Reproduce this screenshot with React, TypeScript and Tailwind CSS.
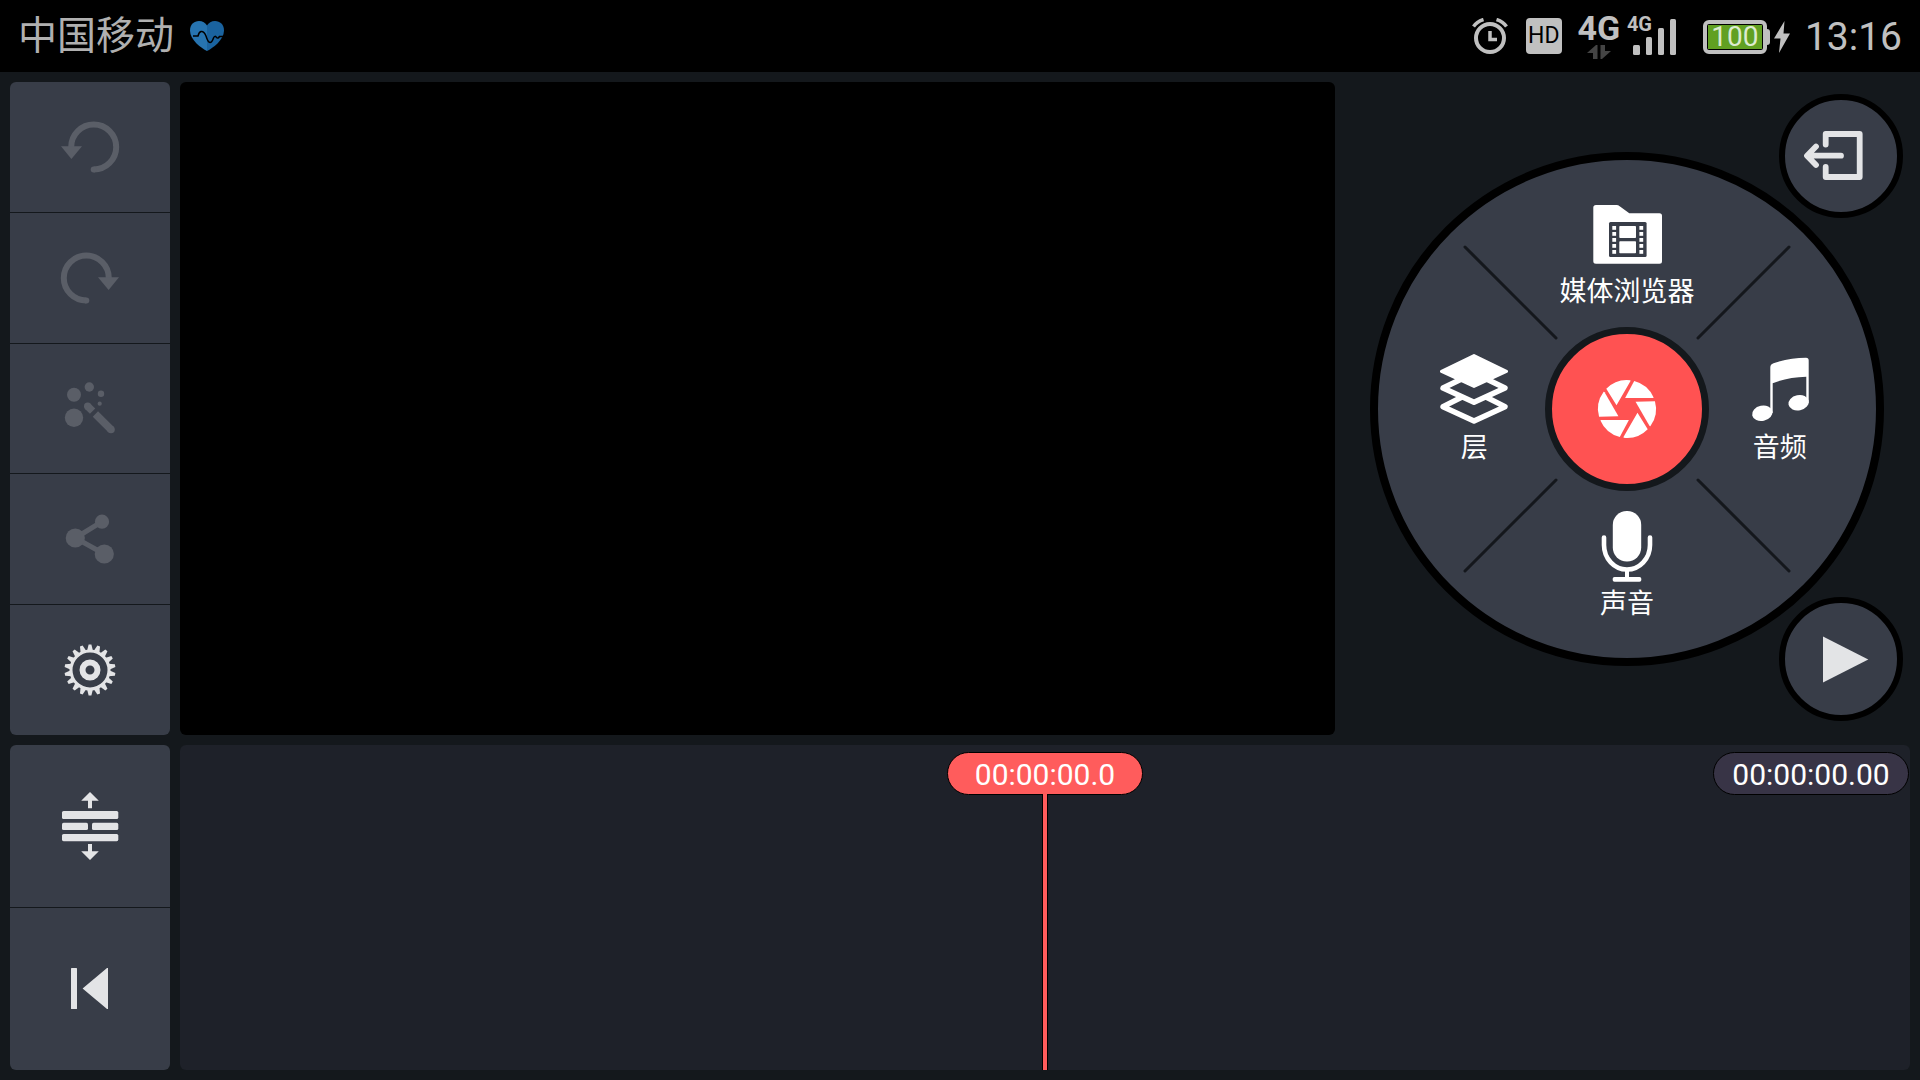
import type { ReactNode } from 'react'

const GEAR_TEETH = Array.from({ length: 18 }, (_, i) => i * 20)
const BLADES = [0, 60, 120, 180, 240, 300]
const SPROCKETS = [-8, -2, 4, 10, 16]

interface GlyphProps {
  size?: 'sm' | 'lg'
  children: ReactNode
}

// All glyphs are drawn around 0,0 so they sit in the middle of their button
function Glyph({ size = 'lg', children }: GlyphProps) {
  return size === 'lg' ? (
    <svg className="w-20 h-20 shrink-0" viewBox="-40 -40 80 80" fill="currentColor" aria-hidden="true">
      {children}
    </svg>
  ) : (
    <svg className="w-18 h-18 shrink-0" viewBox="-36 -36 72 72" fill="currentColor" aria-hidden="true">
      {children}
    </svg>
  )
}

const UndoIcon = () => (
  <Glyph>
    <path d="M-18.8 0A22.5 22.5 0 1 1 3.7 22.5" fill="none" stroke="currentColor" strokeWidth="6" />
    <circle cx="3.7" cy="22.5" r="3" />
    <path d="M-29-.8H-8L-18.6 12Z" />
  </Glyph>
)

const RedoIcon = () => (
  <Glyph>
    <path d="M18.8 0A22.5 22.5 0 1 0-3.7 22.5" fill="none" stroke="currentColor" strokeWidth="6" />
    <circle cx="-3.7" cy="22.5" r="3" />
    <path d="M29-.8H8L18.6 12Z" />
  </Glyph>
)

const WandIcon = () => (
  <Glyph>
    <circle cx="-16" cy="-13.3" r="7" />
    <circle cx="-.7" cy="-21" r="4.7" />
    <circle cx="11" cy="-14.3" r="3.2" />
    <circle cx="9.7" cy="-4.3" r="2.1" />
    <circle cx="-16" cy="9.7" r="9.2" />
    <circle cx="-2.3" cy="-1.7" r="3.7" />
    <circle cx="21" cy="21.5" r="3.8" />
    <path d="M-2.3-1.7L2.6 3.2M5.4 6L21 21.5" stroke="currentColor" strokeWidth="7.5" />
  </Glyph>
)

const ShareIcon = () => (
  <Glyph>
    <path d="M12-17.3L-14.7-1L14.3 15" fill="none" stroke="currentColor" strokeWidth="5" />
    <circle cx="-14.7" cy="-1" r="9.6" />
    <circle cx="12" cy="-17.3" r="7.1" />
    <circle cx="14.3" cy="15" r="9.6" />
  </Glyph>
)

const GearIcon = () => (
  <Glyph>
    {GEAR_TEETH.map((angle) => (
      <path key={angle} d="M-3-19L-1.4-25.5H1.4L3-19Z" transform={`rotate(${angle})`} />
    ))}
    <circle r="19" fill="none" stroke="currentColor" strokeWidth="3" />
    <circle r="7.5" fill="none" stroke="currentColor" strokeWidth="6" />
  </Glyph>
)

const ExpandTracksIcon = () => (
  <Glyph>
    <path d="M0-34L8.8-25.2H2V-17.7H-2V-25.2H-8.8Z" />
    <rect x="-28" y="-15" width="56.3" height="8" rx="1.6" />
    <rect x="-28" y="-3.2" width="26" height="7.2" rx="1.6" />
    <rect x="2" y="-3.2" width="26.3" height="7.2" rx="1.6" />
    <rect x="-28" y="8" width="56.3" height="7.2" rx="1.6" />
    <path d="M0 34L8.8 25.2H2V18H-2V25.2H-8.8Z" />
  </Glyph>
)

const SkipStartIcon = () => (
  <Glyph>
    <rect x="-19" y="-21" width="6" height="41" rx=".6" />
    <path d="M-7.4-.5L17-21H18V20H17Z" />
  </Glyph>
)

const ExitIcon = () => (
  <Glyph>
    <g fill="none" stroke="currentColor" strokeWidth="5.8" strokeLinecap="round" strokeLinejoin="round">
      <path d="M-15.3-11.5V-22H18.7V21H-15.3V11" />
      <path d="M-33-.3H0M-25-9.5L-34-.3L-25 9" />
    </g>
  </Glyph>
)

const PlayIcon = () => (
  <Glyph>
    <path d="M-18-22.5L27.3.4L-18 23.5Z" />
  </Glyph>
)

const MediaIcon = () => (
  <Glyph size="sm">
    <path d="M-31-29H-10.500Q-8.800-29-7-27.600L2.300-20.700H32.500Q35-20.700 35-18.200V27.200Q35 29.700 32.500 29.700H-31Q-33.700 29.700-33.700 27.200V-26.500Q-33.700-29-31-29Z" />
    <rect x="-18" y="-12" width="37.600" height="35" rx="1.500" className="fill-[#383d48]" />
    <rect x="-7.700" y="-8" width="16.700" height="12" rx=".8" />
    <rect x="-7.700" y="7.200" width="16.700" height="12" rx=".8" />
    {SPROCKETS.map((y) => (
      <g key={y}>
        <rect x="-14.700" y={y} width="3.800" height="3.800" />
        <rect x="12.400" y={y} width="3.800" height="3.800" />
      </g>
    ))}
  </Glyph>
)

const LayersIcon = () => (
  <Glyph size="sm">
    <g stroke="currentColor" strokeLinejoin="round">
      <path d="M0 1L31 16.700L0 31L-31 16.700Z" strokeWidth="5.400" className="fill-[#383d48]" />
      <path d="M0-17L31-2L0 12.200L-31-2Z" strokeWidth="5.400" className="fill-[#383d48]" />
      <path d="M0-34.500L32.500-18.700L0-3.500L-32.500-18.700Z" strokeWidth="3" />
    </g>
  </Glyph>
)

const AudioIcon = () => (
  <Glyph size="sm">
    <ellipse cx="-17.700" cy="23.300" rx="10.300" ry="7.600" transform="rotate(-12 -17.700 23.300)" />
    <ellipse cx="18.600" cy="12.700" rx="10.300" ry="7.600" transform="rotate(-12 18.600 12.700)" />
    <path d="M-9.700-22.500Q-9.700-25.700-6.500-26.800Q10-32 26-32.200Q28.700-32.200 28.700-29.500V13H26.300V-13.300Q8-13-7.300-6.700V23H-9.700Z" />
  </Glyph>
)

const MicIcon = () => (
  <Glyph size="sm">
    <rect x="-14.200" y="-35" width="28.400" height="50.500" rx="14" />
    <path d="M-23-8.500V-1A23 24.500 0 0 0 23-1V-8.500" fill="none" stroke="currentColor" strokeWidth="4.600" strokeLinecap="round" />
    <rect x="-2" y="23" width="4" height="10" />
    <rect x="-14.300" y="31" width="28.600" height="4.800" rx="1.800" />
  </Glyph>
)

const ApertureIcon = () => (
  <Glyph>
    {BLADES.map((angle) => (
      <path key={angle} d="M-1.900-11L7.200-28.100A29 29 0 0 1 26.600-11.600Q26.400-11 25.800-11Z" transform={`rotate(${angle})`} />
    ))}
  </Glyph>
)

const EDIT_ACTIONS = [
  { label: '撤消', Icon: UndoIcon, disabled: true },
  { label: '重做', Icon: RedoIcon, disabled: true },
  { label: '效果', Icon: WandIcon, disabled: true },
  { label: '分享', Icon: ShareIcon, disabled: true },
  { label: '设置', Icon: GearIcon, disabled: false },
]

const TIMELINE_ACTIONS = [
  { label: '展开时间轴', Icon: ExpandTracksIcon, disabled: false },
  { label: '跳到开头', Icon: SkipStartIcon, disabled: false },
]

const WHEEL_ACTIONS = [
  { label: '媒体浏览器', Icon: MediaIcon, place: 'col-start-2 row-start-1 pt-2.5' },
  { label: '层', Icon: LayersIcon, place: 'col-start-1 row-start-2 pt-1.5' },
  { label: '音频', Icon: AudioIcon, place: 'col-start-3 row-start-2 pt-1.5' },
  { label: '声音', Icon: MicIcon, place: 'col-start-2 row-start-3 pt-0.5' },
]

function StatusBar() {
  return (
    <header className="h-18 shrink-0 flex items-center justify-between bg-black text-[#c0c0c0] px-[18px]">
      <div className="flex items-center gap-4">
        <span className="text-[39px] leading-10 text-[#b0b0b0]">中国移动</span>
        <svg className="w-[34px] h-[30px]" viewBox="0 0 34 30" aria-hidden="true">
          <path d="M17 30C11 27 0 19 0 9.500C0 3.500 4 0 9 0C12.500 0 15.500 1.800 17 4.500Z" fill="#2774b0" />
          <path d="M17 30C23 27 34 19 34 9.500C34 3.500 30 0 25 0C21.500 0 18.500 1.800 17 4.500Z" fill="#1a639f" />
          <path
            d="M3 15H8Q9 11 11 10.500Q14 10 16 15Q18 21.500 20 21.500Q22 21.500 23.500 17Q25 14 26.500 16.500Q28 18 29.500 15.500H34"
            fill="none"
            stroke="#000"
            strokeWidth="1.500"
          />
        </svg>
      </div>

      <div className="flex items-center">
        <svg className="w-9 h-9" viewBox="0 0 36 36" fill="none" stroke="currentColor" aria-hidden="true">
          <circle cx="18" cy="20" r="14" strokeWidth="4" />
          <path d="M18 13V21.500H25" strokeWidth="3.500" />
          <path d="M1.500 8.500Q5 3.500 11.500 1.500M34.500 8.500Q31 3.500 24.500 1.500" strokeWidth="3.500" />
        </svg>
        <span className="ml-[18px] w-9 h-9 rounded-sm bg-[#c0c0c0] text-black text-[23px] flex items-center justify-center">
          HD
        </span>
        <div className="ml-4 w-[42px] flex flex-col items-center">
          <span className="text-[34px] leading-8 font-bold">4G</span>
          <svg className="w-6 h-4" viewBox="0 0 24 16" fill="#444" aria-hidden="true">
            <path d="M10.500 1V15H6V9H0L9 1ZM13.500 1H18V7H24L15 15H13.500Z" />
          </svg>
        </div>
        <div className="relative ml-[7px] w-[50px] h-11">
          <span className="absolute left-0 top-0 text-xl leading-5 font-bold">4G</span>
          <svg className="w-full h-full" viewBox="0 0 50 44" fill="currentColor" aria-hidden="true">
            <rect x="6" y="31" width="7" height="10" rx="1.500" />
            <rect x="19" y="23" width="6" height="18" rx="1.500" />
            <rect x="31" y="14" width="6" height="27" rx="1.500" />
            <rect x="43" y="5" width="6" height="36" rx="1.500" />
          </svg>
        </div>
        <div className="ml-[26px] flex items-center pt-0.5">
          <div className="w-16 h-[34px] rounded-md border-4 border-[#c0c0c0] p-px flex">
            <span className="flex-1 bg-[#61a022] text-[#dcebd0] text-[28px] flex items-center justify-center">
              100
            </span>
          </div>
          <div className="w-[3px] h-4 rounded-r-sm bg-[#c0c0c0]" />
          <svg className="ml-1 w-4 h-8" viewBox="0 0 16 32" fill="currentColor" aria-hidden="true">
            <path d="M10.500 0L0 17.500H6.500L5 32L16 12.500H9.500Z" />
          </svg>
        </div>
        <time className="ml-[15px] pt-0.5 text-[39px] leading-10">13:16</time>
      </div>
    </header>
  )
}

function ButtonStack({ actions }: { actions: typeof EDIT_ACTIONS }) {
  return (
    <nav className="w-40 shrink-0 flex flex-col gap-px rounded-md overflow-hidden">
      {actions.map(({ label, Icon, disabled }) => (
        <button
          key={label}
          type="button"
          aria-label={label}
          disabled={disabled}
          className="flex-1 flex items-center justify-center bg-[#383d48] text-[#e3e4e6] disabled:text-[#5a5e67]"
        >
          <Icon />
        </button>
      ))}
    </nav>
  )
}

function ActionWheel() {
  return (
    <div className="relative w-[514px] h-[514px] shrink-0 rounded-full border-8 border-black bg-[#383d48] grid grid-cols-3 grid-rows-3 px-5 py-3">
      <svg
        className="absolute inset-0 w-full h-full pointer-events-none"
        viewBox="-249 -249 498 498"
        stroke="#14171c"
        strokeWidth="3"
        strokeLinecap="round"
        aria-hidden="true"
      >
        <path d="M-162-162L-71-71M162-162L71-71M-162 162L-71 71M162 162L71 71" />
      </svg>
      {WHEEL_ACTIONS.map(({ label, Icon, place }) => (
        <button
          key={label}
          type="button"
          className={`flex flex-col items-center justify-center text-white text-[27px] leading-11 whitespace-nowrap ${place}`}
        >
          <Icon />
          {label}
        </button>
      ))}
      <div className="col-start-2 row-start-2 flex items-center justify-center">
        <button
          type="button"
          aria-label="拍摄"
          className="w-[164px] h-[164px] shrink-0 rounded-full border-[7px] border-[#14181c] bg-[#ff5252] text-white flex items-center justify-center"
        >
          <ApertureIcon />
        </button>
      </div>
    </div>
  )
}

const cornerButton =
  'absolute right-[7px] w-[124px] h-[124px] rounded-full border-[6px] border-black bg-[#383d48] text-[#e3e4e6] flex items-center justify-center'

export default function App() {
  return (
    <div className="min-h-screen flex flex-col bg-[#14181c] font-[Roboto,'Noto_Sans_CJK_SC',sans-serif]">
      <StatusBar />
      <main className="flex-1 grid grid-rows-[653fr_325fr] gap-2.5 p-2.5">
        <div className="flex gap-2.5">
          <ButtonStack actions={EDIT_ACTIONS} />
          <section aria-label="预览" className="flex-1 rounded-md bg-black" />
          <section className="relative w-[565px] shrink-0 flex items-center justify-center pr-px">
            <ActionWheel />
            <button type="button" aria-label="退出" className={`${cornerButton} top-3`}>
              <ExitIcon />
            </button>
            <button type="button" aria-label="播放" className={`${cornerButton} bottom-3.5`}>
              <PlayIcon />
            </button>
          </section>
        </div>

        <div className="flex gap-2.5">
          <ButtonStack actions={TIMELINE_ACTIONS} />
          <section aria-label="时间轴" className="relative flex-1 rounded-md bg-[#1e2129] text-white text-[30px]">
            <div className="absolute inset-x-0 top-[7px] bottom-0 flex flex-col items-center">
              <span className="w-[196px] h-[43px] rounded-full border border-black bg-[#ff5c5c] flex items-center justify-center pt-0.5">
                00:00:00.0
              </span>
              <span className="relative -mt-px w-1.5 flex-1 border-x border-black bg-[#ff5c5c]" />
            </div>
            <span className="absolute right-px top-[7px] w-[196px] h-[43px] rounded-full border border-black bg-[#383446] flex items-center justify-center pt-0.5">
              00:00:00.00
            </span>
          </section>
        </div>
      </main>
    </div>
  )
}
